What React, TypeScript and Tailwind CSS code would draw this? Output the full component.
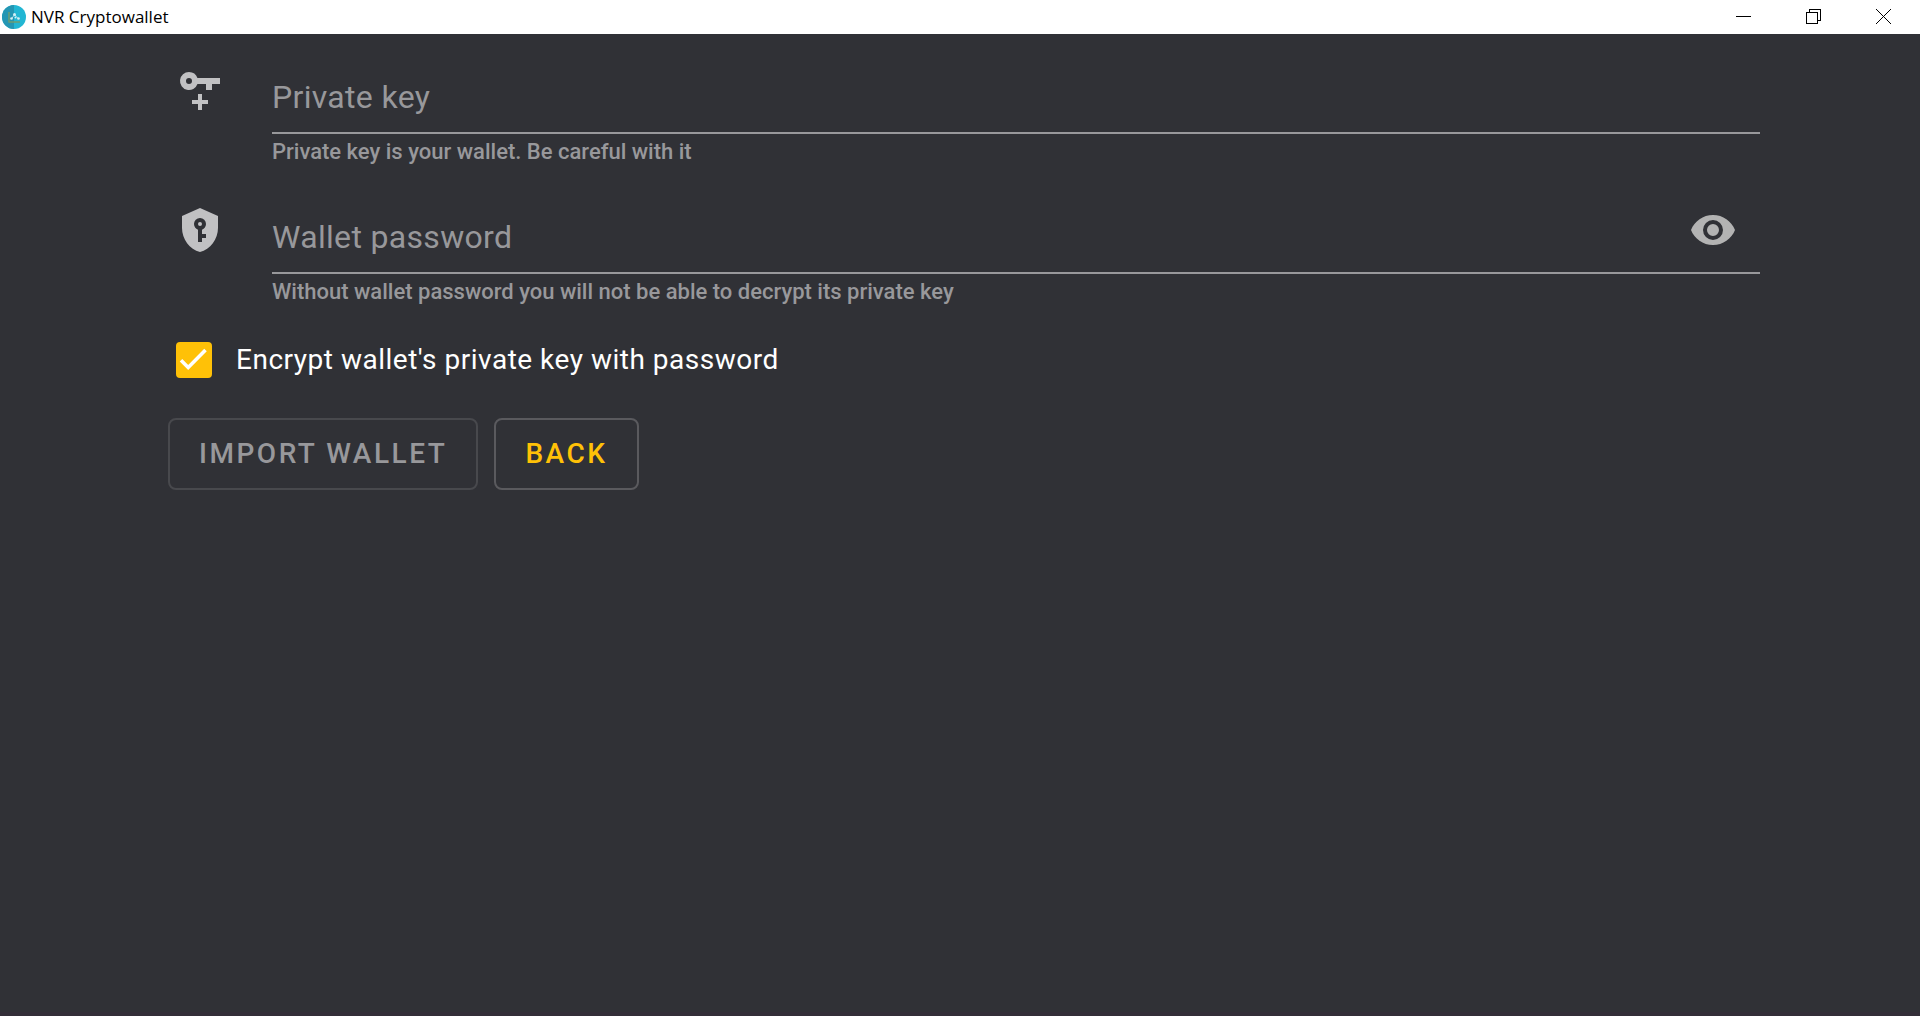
import { useState } from "react";
import type { ReactNode } from "react";

function KeyPlusIcon() {
  return (
    <svg viewBox="0 0 24 24" className="size-12 fill-[#c1c1c3]" aria-hidden="true">
      <path d="M6.5 3A4.5 4.5 0 1 0 10.74 9H15V12H18V9H22V6H10.74A4.5 4.5 0 0 0 6.5 3M6.5 6A1.5 1.5 0 1 1 6.5 9A1.5 1.5 0 0 1 6.5 6M11 14V17H8V19H11V22H13V19H16V17H13V14Z" />
    </svg>
  );
}

function ShieldKeyIcon() {
  return (
    <svg viewBox="0 0 24 24" className="size-12 fill-[#c1c1c3]" aria-hidden="true">
      <path d="M12,8A1,1 0 0,1 13,9A1,1 0 0,1 12,10A1,1 0 0,1 11,9A1,1 0 0,1 12,8M21,11C21,16.55 17.16,21.74 12,23C6.84,21.74 3,16.55 3,11V5L12,1L21,5V11M12,6A3,3 0 0,0 9,9C9,10.31 9.83,11.42 11,11.83V18H13V16H15V14H13V11.83C14.17,11.42 15,10.31 15,9A3,3 0 0,0 12,6Z" />
    </svg>
  );
}

function EyeIcon() {
  return (
    <svg viewBox="0 0 24 24" className="size-12 fill-[#b3b3b3]" aria-hidden="true">
      <path d="M12,9A3,3 0 0,0 9,12A3,3 0 0,0 12,15A3,3 0 0,0 15,12A3,3 0 0,0 12,9M12,17A5,5 0 0,1 7,12A5,5 0 0,1 12,7A5,5 0 0,1 17,12A5,5 0 0,1 12,17M12,4.5C7,4.5 2.73,7.61 1,12C2.73,16.39 7,19.5 12,19.5C17,19.5 21.27,16.39 23,12C21.27,7.61 17,4.5 12,4.5Z" />
    </svg>
  );
}

function AppLogo() {
  return (
    <svg viewBox="0 0 24 24" className="size-6" aria-hidden="true">
      <circle cx="12" cy="12" r="12" fill="#22b6d3" />
      <path d="M12 0A12 12 0 0 0 12 24Z" fill="#2496b3" />
      <path d="M7 7V17H18" fill="none" stroke="#6d9d73" strokeWidth="1.5" />
      <path d="M9.5 14L12.5 9.5L16.5 14" fill="none" stroke="#9adbe8" strokeWidth="1" />
      <circle cx="9.5" cy="13.5" r="1.3" fill="#d5eff5" />
      <circle cx="12.5" cy="9.5" r="1.5" fill="#d5eff5" />
      <circle cx="13.5" cy="12.5" r="1" fill="#d5eff5" />
      <circle cx="16.5" cy="13.5" r="1.3" fill="#d5eff5" />
    </svg>
  );
}

function TitleBar() {
  const control = "flex h-full w-[70px] items-start justify-center pt-[9px]";
  return (
    <header className="flex h-[34px] items-center bg-white text-black">
      <div className="flex items-center gap-[5px] pl-[2px]">
        <AppLogo />
        <h1 className="font-['Open_Sans','Noto_Sans',sans-serif] text-[17px] leading-[26px]">NVR Cryptowallet</h1>
      </div>
      <div className="ml-auto flex h-full pr-[2px]">
        <button type="button" aria-label="Minimize" className={control}>
          <svg viewBox="0 0 15 15" className="size-[15px]" shapeRendering="crispEdges">
            <path d="M0 7.5H15" stroke="#000" />
          </svg>
        </button>
        <button type="button" aria-label="Restore" className={control}>
          <svg viewBox="0 0 15 15" className="size-[15px]" shapeRendering="crispEdges">
            <path d="M.5 3.5H11.5V14.5H.5ZM3.5 3V.5H14.5V11.5H12" fill="none" stroke="#000" />
          </svg>
        </button>
        <button type="button" aria-label="Close" className={control}>
          <svg viewBox="0 0 15 15" className="size-[15px]">
            <path d="M0 0L15 15M15 0L0 15" stroke="#000" />
          </svg>
        </button>
      </div>
    </header>
  );
}

type FieldProps = {
  id: string;
  label: string;
  hint: string;
  type: string;
  icon: ReactNode;
  action?: ReactNode;
};

function Field({ id, label, hint, type, icon, action }: FieldProps) {
  return (
    <div className="flex gap-12 pl-2">
      <div className="pt-8">{icon}</div>
      <div className="min-w-0 flex-1">
        <div className="relative flex h-[100px] items-end border-b-2 border-[#98989b]">
          <input
            id={id}
            type={type}
            placeholder=" "
            aria-describedby={`${id}-hint`}
            className="peer h-[70px] min-w-0 flex-1 bg-transparent text-[32px] text-white outline-none"
          />
          <label
            htmlFor={id}
            className="pointer-events-none invisible absolute bottom-0 left-0 text-[32px] leading-[70px] tracking-[0.01em] text-[#98989b] peer-placeholder-shown:visible"
          >
            {label}
          </label>
          {action}
        </div>
        <p id={`${id}-hint`} className="h-10 text-[22px] font-medium leading-9 text-[#98989b]">
          {hint}
        </p>
      </div>
    </div>
  );
}

export default function App() {
  const [encrypted, setEncrypted] = useState(true);
  const [shown, setShown] = useState(false);

  return (
    <div className="flex min-h-screen flex-col border-b-4 border-[#332e38] bg-[#303136] font-['Roboto',sans-serif]">
      <TitleBar />
      <main className="pl-[168px] pr-40">
        <form onSubmit={(e) => e.preventDefault()}>
          <Field
            id="private-key"
            label="Private key"
            hint="Private key is your wallet. Be careful with it"
            type="text"
            icon={<KeyPlusIcon />}
          />
          <Field
            id="wallet-password"
            label="Wallet password"
            hint="Without wallet password you will not be able to decrypt its private key"
            type={shown ? "text" : "password"}
            icon={<ShieldKeyIcon />}
            action={
              <button
                type="button"
                aria-label="Show password"
                onClick={() => setShown(!shown)}
                className="mr-[23px] flex h-[66px] items-start"
              >
                <EyeIcon />
              </button>
            }
          />
          <label className="ml-2 mt-6 flex h-11 w-fit items-center gap-6 text-[28px] text-white">
            <span className="relative flex size-9">
              <input
                type="checkbox"
                checked={encrypted}
                onChange={(e) => setEncrypted(e.target.checked)}
                className="peer size-9 appearance-none rounded border-4 border-[#98989b] checked:border-[#ffc107] checked:bg-[#ffc107]"
              />
              <svg
                viewBox="0 0 36 36"
                className="pointer-events-none invisible absolute inset-0 size-9 peer-checked:visible"
                aria-hidden="true"
              >
                <path d="M5 18.2L12.2 25.4L29.5 8.1" fill="none" stroke="#fff" strokeWidth="3.6" />
              </svg>
            </span>
            <span className="leading-[44px] tracking-[0.018em]">Encrypt wallet's private key with password</span>
          </label>
          <div className="mt-9 flex gap-4 text-[28px] font-medium tracking-[0.09em]">
            <button type="submit" disabled className="h-[72px] rounded-lg border-2 border-[#48494d] px-[29px] text-[#98989b]">
              IMPORT WALLET
            </button>
            <button type="button" className="h-[72px] rounded-lg border-2 border-[#5a5a5e] px-[29px] text-[#ffc107]">
              BACK
            </button>
          </div>
        </form>
      </main>
    </div>
  );
}
